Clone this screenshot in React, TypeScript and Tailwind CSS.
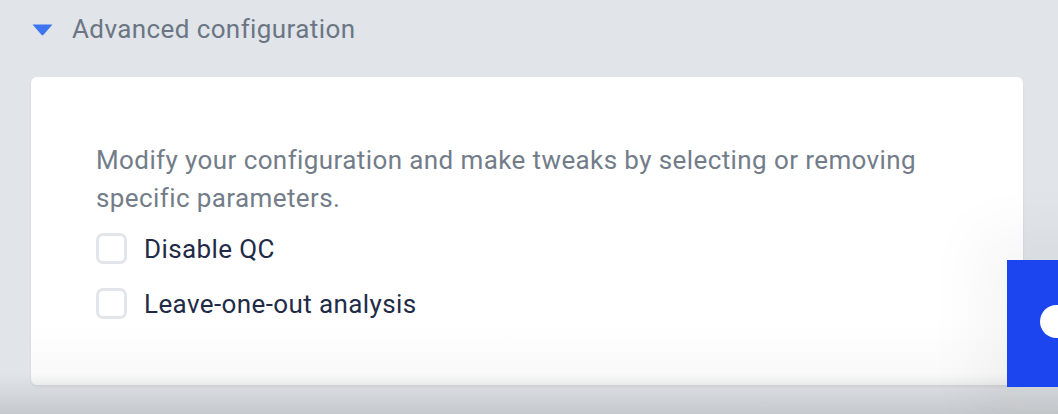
import React, { useState } from 'react';

const options = [
  { id: 'qc', label: 'Disable QC' },
  { id: 'loo', label: 'Leave-one-out analysis' },
];

export default function App() {
  const [checked, setChecked] = useState<Record<string, boolean>>({});

  return (
    <div
      className="relative h-[414px] w-[1058px] overflow-hidden bg-[#e1e4e8] tracking-[0.4px]"
      style={{ fontFamily: 'Roboto, "Noto Sans", sans-serif' }}
    >
      {/* header */}
      <div className="flex h-[58px] items-center gap-[19px] pl-[32px] pt-[1px]">
        <svg width="21" height="12" viewBox="0 0 21 12">
          <path d="M0.5 0.5 H20.5 L11.5 10.8 Q10.5 11.8 9.5 10.8 Z" fill="#3c74f2" />
        </svg>
        <span className="text-[26px] text-[#6b7684]">Advanced configuration</span>
      </div>

      {/* card */}
      <div className="ml-[31px] mt-[19px] h-[308px] w-[992px] rounded-[6px] bg-gradient-to-b from-white from-80% to-[#f8f8f8] shadow-[0_2px_3px_rgba(0,0,0,0.08)]">
        <div className="px-[65px] pt-[64px]">
          <p className="text-[26px] leading-[38px] text-[#737d89]">
            Modify your configuration and make tweaks by selecting or removing specific parameters.
          </p>
          <div className="mt-[16px] flex flex-col gap-[24px]">
            {options.map((o) => (
              <label key={o.id} className="flex cursor-pointer items-center gap-[17px]">
                <input
                  type="checkbox"
                  className="peer sr-only"
                  checked={!!checked[o.id]}
                  onChange={() => setChecked((c) => ({ ...c, [o.id]: !c[o.id] }))}
                />
                <span className="h-[31px] w-[31px] rounded-[7px] border-[3px] border-[#e2e5ea] bg-white" />
                <span className="text-[26px] leading-[30px] text-[#1f2b47]">{o.label}</span>
              </label>
            ))}
          </div>
        </div>
      </div>

      {/* bottom shade */}
      <div className="pointer-events-none absolute inset-x-0 bottom-0 h-[40px] bg-gradient-to-b from-transparent to-[#c6c9cd]" />

      {/* floating button partially off-screen */}
      <div className="absolute left-[1007px] top-[260px] h-[127px] w-[80px] bg-[#1c45f0] shadow-[0_0_60px_30px_rgba(0,0,0,0.04)]">
        <div className="absolute left-[33px] top-[45px] h-[33px] w-[40px] rounded-full bg-white" />
      </div>
    </div>
  );
}
